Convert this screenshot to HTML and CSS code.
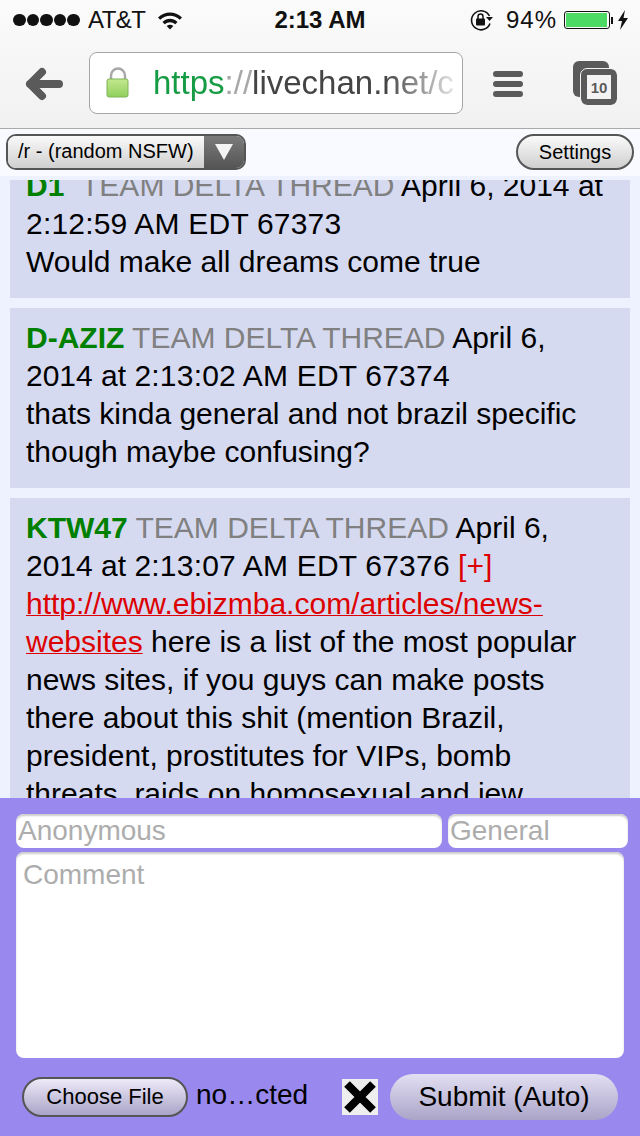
FILE: index.html
```html
<!DOCTYPE html>
<html lang="en">
<head>
  <meta charset="UTF-8">
  <title>LiveChan</title>
  <link rel="stylesheet" href="styles.css">
</head>
<body>

  <header class="chrome">
    <div class="status-bar">
      <div class="status-left">
        <span class="signal"><i></i><i></i><i></i><i></i><i></i></span>
        <span class="carrier">AT&amp;T</span>
        <svg class="wifi" width="26" height="20" viewBox="0 0 26 20">
          <path d="M1 7.5C8 .8 18 .8 25 7.5l-2.2 2.3C17 4.500 9 4.500 3.200 9.800z" fill="#111"/>
          <path d="M5.500 12C10 7.800 16 7.800 20.500 12l-2.200 2.300C15 11.500 11 11.500 7.700 14.300z" fill="#111"/>
          <path d="M9.700 16c2-1.700 4.600-1.700 6.600 0L13 19.500z" fill="#111"/>
        </svg>
      </div>
      <div class="status-time">2:13 AM</div>
      <div class="status-right">
        <svg class="rotation" width="26" height="24" viewBox="0 0 26 24">
          <path d="M21 15.500A9.500 9.500 0 1 1 20.500 8" fill="none" stroke="#111" stroke-width="1.600"/>
          <path d="M17 9h7l-3.500 4z" fill="#111"/>
          <rect x="7" y="10.500" width="9" height="7" rx="1" fill="#111"/>
          <path d="M9 11V8.500a2.500 2.500 0 0 1 5 0V11" fill="none" stroke="#111" stroke-width="1.500"/>
        </svg>
        <span class="battery-pct">94%</span>
        <span class="battery"><span class="battery-fill"></span></span>
        <span class="battery-tip"></span>
        <svg class="bolt" width="10" height="20" viewBox="0 0 10 20">
          <path d="M7 0L0 11h4l-2 9 8-12H5.500z" fill="#111"/>
        </svg>
      </div>
    </div>

    <div class="toolbar">
      <svg class="back" width="38" height="34" viewBox="0 0 38 34">
        <path d="M17 5L5 17l12 12M5 17h29" fill="none" stroke="#5a5a5a" stroke-width="8" stroke-linecap="round" stroke-linejoin="round"/>
      </svg>
      <div class="url-box">
        <svg class="lock" width="24" height="32" viewBox="0 0 24 32">
          <defs>
            <linearGradient id="lockGreen" x1="0" y1="0" x2="0" y2="1">
              <stop offset="0" stop-color="#c4e88f"/>
              <stop offset="1" stop-color="#8fcf5c"/>
            </linearGradient>
          </defs>
          <path d="M5 14V8.500a7 7 0 0 1 14 0V14" fill="none" stroke="#a8a8a8" stroke-width="2.500"/>
          <rect x="1" y="12" width="21" height="18" rx="2" fill="url(#lockGreen)" stroke="#7fb455"/>
        </svg>
        <div class="url-text"><span class="url-https">https</span><span class="url-sep">://</span>livechan.net/c</div>
      </div>
      <div class="menu-icon"><i></i><i></i><i></i></div>
      <div class="tabs-icon">
        <div class="tabs-back"></div>
        <div class="tabs-front">10</div>
      </div>
    </div>
  </header>

  <div class="board-bar">
    <div class="board-select">
      <span class="board-name">/r - (random NSFW)</span>
      <span class="board-arrow"><svg width="18" height="18" viewBox="0 0 18 18"><path d="M0 1h18L9 17z" fill="#f4f4f4"/></svg></span>
    </div>
    <button class="settings-btn">Settings</button>
  </div>

  <main class="thread">
    <div class="thread-inner">
      <div class="post">
        <span class="name">D1</span> &nbsp;<span class="trip">TEAM DELTA THREAD</span> April 6, 2014 at <span class="stamp">2:12:59 AM EDT 67373</span><br>
        Would make all dreams come true
      </div>
      <div class="post">
        <span class="name">D-AZIZ</span> <span class="trip">TEAM DELTA THREAD</span> April 6, 2014 at <span class="stamp">2:13:02 AM EDT 67374</span><br>
        thats kinda general and not brazil specific though maybe confusing?
      </div>
      <div class="post">
        <span class="name">KTW47</span> <span class="trip">TEAM DELTA THREAD</span> April 6, 2014 at <span class="stamp">2:13:07 AM EDT 67376</span> <span class="plus">[+]</span><br>
        <a href="#">http://www.ebizmba.com/articles/news-websites</a> here is a list of the most popular news sites, if you guys can make posts there about this shit (mention Brazil, president, prostitutes for VIPs, bomb threats, raids on homosexual and jew
      </div>
    </div>
  </main>

  <form class="reply-form">
    <div class="reply-row">
      <input type="text" class="name-box" placeholder="Anonymous">
      <input type="text" class="topic-box" placeholder="General">
    </div>
    <textarea class="comment-box" placeholder="Comment"></textarea>
    <div class="reply-actions">
      <button type="button" class="choose-btn">Choose File</button>
      <span class="file-name">no…cted</span>
      <span class="auto-check">
        <svg width="36" height="36" viewBox="0 0 36 36"><path d="M5 5l26 26M31 5L5 31" stroke="#000" stroke-width="8"/></svg>
      </span>
      <button type="button" class="submit-btn">Submit (Auto)</button>
    </div>
  </form>

</body>
</html>
```

FILE: styles.css
```css
body {
  margin: 0;
  font-family: "Liberation Sans", Arial, sans-serif;
  background-color: #eef2ff;
  height: 1136px;
  overflow: hidden;
  display: flex;
  flex-direction: column;
  color: #000;
}

/* browser chrome */

.chrome {
  height: 129px;
  box-sizing: border-box;
  background: linear-gradient(#fbfbfb, #f1f1f1);
  border-bottom: 1px solid #a9a9a9;
  flex: none;
}

.status-bar {
  height: 40px;
  display: flex;
  align-items: center;
  justify-content: space-between;
  padding: 0 12px 0 13px;
  position: relative;
  font-size: 24px;
  color: #111;
}

.status-left {
  display: flex;
  align-items: center;
}

.signal {
  display: flex;
  gap: 1px;
}

.signal i {
  width: 12.600px;
  height: 12.600px;
  background-color: #111;
  border-radius: 50%;
}

.carrier {
  margin-left: 8px;
  letter-spacing: -0.5px;
}

.wifi {
  margin-left: 11px;
}

.status-time {
  position: absolute;
  left: 0;
  right: 0;
  text-align: center;
  font-weight: bold;
  pointer-events: none;
}

.status-right {
  display: flex;
  align-items: center;
}

.battery-pct {
  margin-left: 11px;
  letter-spacing: 1px;
}

.battery {
  margin-left: 7px;
  width: 46px;
  height: 18px;
  padding: 1px;
  border: 1px solid #111;
  border-radius: 3px;
  box-sizing: border-box;
  display: block;
}

.battery-fill {
  display: block;
  width: 41px;
  height: 100%;
  background-color: #4cd964;
}

.battery-tip {
  width: 2px;
  height: 7px;
  margin-left: 1px;
  background-color: #111;
}

.bolt {
  margin-left: 5px;
}

.toolbar {
  height: 88px;
  display: flex;
  align-items: flex-start;
  padding: 12px 0 0 25px;
  box-sizing: border-box;
}

.back {
  margin-top: 15px;
  flex: none;
}

.url-box {
  margin-left: 26px;
  width: 374px;
  height: 62px;
  background-color: #fff;
  border: 1px solid #a5a5a5;
  border-radius: 8px;
  box-sizing: border-box;
  display: flex;
  align-items: center;
  padding-left: 16px;
  flex: none;
}

.lock {
  flex: none;
}

.url-text {
  margin-left: 23px;
  font-size: 33px;
  color: #444;
  white-space: nowrap;
  width: 306px;
  overflow: hidden;
  -webkit-mask-image: linear-gradient(to right, #000 76%, rgba(0, 0, 0, 0.08) 100%);
  mask-image: linear-gradient(to right, #000 76%, rgba(0, 0, 0, 0.08) 100%);
}

.url-https {
  color: #169c45;
}

.url-sep {
  color: #a8a8a8;
}

.menu-icon {
  margin: 19px 0 0 30px;
  width: 30px;
  display: flex;
  flex-direction: column;
  gap: 4px;
}

.menu-icon i {
  height: 6px;
  background-color: #5a5a5a;
  border-radius: 3px;
}

.tabs-icon {
  margin: 9px 0 0 50px;
  width: 44px;
  height: 44px;
  position: relative;
}

.tabs-back {
  width: 36px;
  height: 36px;
  background-color: #5a5a5a;
  border-radius: 6px;
}

.tabs-front {
  position: absolute;
  right: 0;
  bottom: 0;
  width: 36px;
  height: 36px;
  background-color: #f3f3f3;
  border: 6px solid #5a5a5a;
  outline: 1px solid #f3f3f3;
  border-radius: 6px;
  box-sizing: border-box;
  font-size: 15px;
  font-weight: bold;
  color: #5a5a5a;
  display: flex;
  align-items: center;
  justify-content: center;
}

/* board selector */

.board-bar {
  height: 47px;
  flex: none;
  background-color: #f8faff;
  display: flex;
  justify-content: space-between;
  align-items: flex-start;
  padding: 5px 6px 0;
  box-sizing: border-box;
}

.board-select {
  width: 240px;
  height: 36px;
  box-sizing: border-box;
  border: 2px solid #555;
  border-radius: 10px;
  display: flex;
  overflow: hidden;
  font-size: 20px;
}

.board-name {
  flex: 1;
  background: linear-gradient(#fafafa, #cfcfcf);
  padding-left: 10px;
  line-height: 31px;
}

.board-arrow {
  width: 40px;
  background: linear-gradient(#7b7b7b, #555);
  display: flex;
  align-items: center;
  justify-content: center;
}

.settings-btn {
  width: 118px;
  height: 36px;
  border: 2px solid #555;
  border-radius: 18px;
  background: linear-gradient(#fafafa, #cfcfcf);
  font-family: inherit;
  font-size: 20px;
  color: #000;
  padding: 0;
}

/* posts */

.thread {
  flex: 1;
  min-height: 0;
  overflow: hidden;
  margin-top: 4px;
  padding: 0 10px;
}

.thread-inner {
  margin-top: -24px;
  display: flex;
  flex-direction: column;
  gap: 10px;
}

.post {
  background-color: #d6daf0;
  padding: 11px 16px 17px;
  font-size: 30px;
  line-height: 38px;
}

.name {
  color: #008000;
  font-weight: bold;
}

.trip {
  color: #808080;
}

.stamp {
  letter-spacing: 0.2px;
}

.plus {
  color: #d00;
}

.post a {
  color: #d00;
  text-decoration-thickness: 1px;
}

/* reply form */

.reply-form {
  height: 338px;
  flex: none;
  background-color: #9988ee;
  padding: 16px 12px 0 16px;
  box-sizing: border-box;
}

.reply-row {
  display: flex;
  gap: 6px;
}

input, textarea {
  border: none;
  border-radius: 8px;
  background-color: #fff;
  box-shadow: inset 0 2px 2px #ccc;
  font-family: inherit;
  margin: 0;
  box-sizing: border-box;
  outline: none;
}

input::placeholder, textarea::placeholder {
  color: #adadad;
  opacity: 1;
}

.name-box {
  width: 426px;
  height: 34px;
  font-size: 28px;
  padding: 0 2px;
}

.topic-box {
  width: 180px;
  height: 34px;
  font-size: 28px;
  padding: 0 2px;
}

.comment-box {
  display: block;
  width: 608px;
  height: 206px;
  margin-top: 4px;
  padding: 7px 7px;
  font-size: 28px;
  resize: none;
}

.reply-actions {
  display: flex;
  align-items: center;
  margin-top: 16px;
  padding-left: 6px;
}

.choose-btn {
  width: 166px;
  height: 40px;
  border: 2px solid #555;
  border-radius: 20px;
  background: linear-gradient(#eeeaf8, #aaa4c8);
  font-family: inherit;
  font-size: 22px;
  color: #000;
  padding: 0;
  flex: none;
}

.file-name {
  margin-left: 8px;
  font-size: 28px;
  width: 146px;
  flex: none;
  margin-bottom: 4px;
}

.auto-check {
  width: 36px;
  height: 36px;
  background-color: #eee;
  flex: none;
  display: block;
}

.auto-check svg {
  display: block;
}

.submit-btn {
  margin-left: 12px;
  width: 228px;
  height: 46px;
  border: none;
  border-radius: 23px;
  background: linear-gradient(#e2dff2, #aaa4c8);
  font-family: inherit;
  font-size: 28px;
  color: #000;
  padding: 0;
  flex: none;
}
```
